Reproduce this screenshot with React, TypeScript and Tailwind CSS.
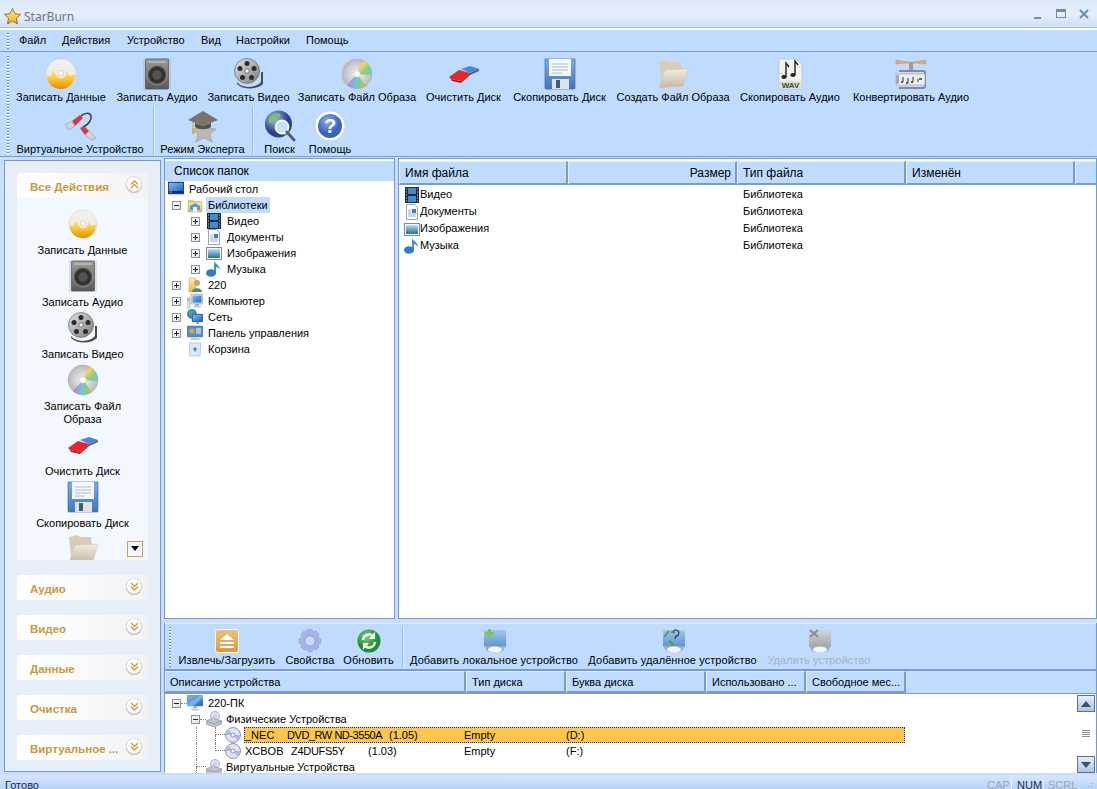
import React from "react";

const Defs = () => (
  <svg width="0" height="0" className="absolute">
    <defs>
      <linearGradient id="gDisc" x1="0" y1="0" x2="0" y2="1"><stop offset="0" stopColor="#f2f2f0" /><stop offset="0.55" stopColor="#ecebe4" /><stop offset="1" stopColor="#e8a820" /></linearGradient>
      <linearGradient id="gFlame" x1="0" y1="0" x2="0" y2="1"><stop offset="0" stopColor="#ffef98" /><stop offset="0.55" stopColor="#f9c52c" /><stop offset="1" stopColor="#e5880e" /></linearGradient>
      <linearGradient id="gSpk" x1="0" y1="0" x2="0" y2="1"><stop offset="0" stopColor="#9a9a98" /><stop offset="1" stopColor="#5a5a58" /></linearGradient>
      <radialGradient id="gCone"><stop offset="0" stopColor="#5c5c5c" /><stop offset="0.7" stopColor="#2a2a2a" /><stop offset="1" stopColor="#777" /></radialGradient>
      <linearGradient id="gReel" x1="0" y1="0" x2="1" y2="1"><stop offset="0" stopColor="#e4e4e4" /><stop offset="1" stopColor="#7c7c7c" /></linearGradient>
      <radialGradient id="gSilver"><stop offset="0" stopColor="#f3f3f3" /><stop offset="1" stopColor="#b9b9b9" /></radialGradient>
      <linearGradient id="gBlue" x1="0" y1="0" x2="0" y2="1"><stop offset="0" stopColor="#7fabdc" /><stop offset="1" stopColor="#3f78bb" /></linearGradient>
      <linearGradient id="gFolder" x1="0" y1="0" x2="0" y2="1"><stop offset="0" stopColor="#f2ece0" /><stop offset="1" stopColor="#c6b8a2" /></linearGradient>
      <radialGradient id="gGlobe" cx="0.35" cy="0.3"><stop offset="0" stopColor="#9cc3e6" /><stop offset="1" stopColor="#2d3f8e" /></radialGradient>
      <radialGradient id="gHelp" cx="0.4" cy="0.3"><stop offset="0" stopColor="#8eaeea" /><stop offset="1" stopColor="#3a62c0" /></radialGradient>
      <linearGradient id="gEject" x1="0" y1="0" x2="0" y2="1"><stop offset="0" stopColor="#eec17c" /><stop offset="1" stopColor="#d9983f" /></linearGradient>
      <radialGradient id="gGreen" cx="0.4" cy="0.3"><stop offset="0" stopColor="#7ed07a" /><stop offset="1" stopColor="#1f8f35" /></radialGradient>
      <linearGradient id="gDrive" x1="0" y1="0" x2="0" y2="1"><stop offset="0" stopColor="#a3c8ea" /><stop offset="1" stopColor="#5a94cc" /></linearGradient>
      <linearGradient id="gGrey" x1="0" y1="0" x2="0" y2="1"><stop offset="0" stopColor="#d2d4d6" /><stop offset="1" stopColor="#a3a6a9" /></linearGradient>
      <linearGradient id="gSky" x1="0" y1="0" x2="0" y2="1"><stop offset="0" stopColor="#bfe0f4" /><stop offset="0.55" stopColor="#5c9fc8" /><stop offset="1" stopColor="#2f7a52" /></linearGradient>
      <linearGradient id="gScreen" x1="0" y1="0" x2="1" y2="1"><stop offset="0" stopColor="#7fc0f0" /><stop offset="1" stopColor="#1c62c8" /></linearGradient>
      <linearGradient id="gYF" x1="0" y1="0" x2="0" y2="1"><stop offset="0" stopColor="#fbe9a8" /><stop offset="1" stopColor="#dfb95a" /></linearGradient>
      <linearGradient id="gStar" x1="0" y1="0" x2="0" y2="1"><stop offset="0" stopColor="#fff39a" /><stop offset="1" stopColor="#f0a818" /></linearGradient>
      <linearGradient id="gRain" x1="0" y1="0" x2="1" y2="1"><stop offset="0" stopColor="#f48aa0" /><stop offset="0.35" stopColor="#f6d25a" /><stop offset="0.65" stopColor="#7fd08a" /><stop offset="1" stopColor="#74bfe0" /></linearGradient>
      <linearGradient id="gRain2" x1="0" y1="0" x2="1" y2="0"><stop offset="0" stopColor="#e070c0" /><stop offset="0.4" stopColor="#74bfe0" /><stop offset="0.7" stopColor="#7fd08a" /><stop offset="1" stopColor="#f3a34f" /></linearGradient>
    </defs>
  </svg>
);

type IP = { s?: number };

const DiscFlame = ({ s = 32 }: IP) => (
  <svg width={s} height={s} viewBox="0 0 32 32">
    <circle cx="16" cy="16" r="15" fill="url(#gDisc)" stroke="#d8d3c0" strokeWidth="0.5" />
    <path d="M2 19c2-3 3-1 4 0 0-4 2-5 3-7 1 3 2 4 3 5 0-3 2-5 3-7 1 3 3 5 4 8 1-2 2-3 3-5 1 3 2 5 3 5 1-1 3-1 5-1-1 8-7 14-14 14S3 27 2 19z" fill="url(#gFlame)" />
    <circle cx="16" cy="15" r="5.5" fill="#f2efe4" opacity="0.85" />
    <circle cx="16" cy="15" r="2.6" fill="#fff" stroke="#bdb9a8" strokeWidth="0.6" />
  </svg>
);
const Speaker = ({ s = 32 }: IP) => (
  <svg width={s} height={s} viewBox="0 0 32 32">
    <rect x="2" y="0" width="28" height="32" rx="2" fill="#8a8a88" opacity="0.22" />
    <rect x="4.5" y="1" width="23" height="30" rx="1" fill="url(#gSpk)" stroke="#4a4a48" strokeWidth="0.6" />
    <rect x="7" y="3" width="18" height="2" fill="#b4b4b2" />
    <circle cx="16" cy="17" r="10" fill="url(#gCone)" stroke="#8c8c8a" />
    <circle cx="16" cy="17" r="4.5" fill="#555" />
  </svg>
);
const FilmReel = ({ s = 32 }: IP) => (
  <svg width={s} height={s} viewBox="0 0 32 32">
    <path d="M4 24c4 6 18 7 24 0l0-10 2 0 0 12c-6 6-20 6-26 0z" fill="#4c4c4a" />
    <circle cx="14" cy="13" r="12.5" fill="url(#gReel)" stroke="#666" strokeWidth="0.7" />
    <g fill="#2b2b2b">
      <circle cx="14" cy="5.5" r="2.5" /><circle cx="21" cy="10.5" r="2.5" /><circle cx="18.5" cy="19.5" r="2.5" /><circle cx="9.5" cy="19.5" r="2.5" /><circle cx="7" cy="10.5" r="2.5" />
    </g>
    <circle cx="14" cy="13" r="2.2" fill="#efefef" stroke="#444" strokeWidth="0.6" />
  </svg>
);
const RainbowDisc = ({ s = 32 }: IP) => (
  <svg width={s} height={s} viewBox="0 0 32 32">
    <circle cx="16" cy="16" r="15" fill="url(#gSilver)" stroke="#a8a8a8" strokeWidth="0.5" />
    <path d="M16 16L21 2A15 15 0 0 1 31 17z" fill="url(#gRain)" />
    <path d="M16 16L6 27A15 15 0 0 0 25 28z" fill="url(#gRain2)" />
    <circle cx="16" cy="16" r="3.2" fill="#fff" stroke="#bbb" strokeWidth="0.5" />
  </svg>
);
const Eraser = ({ s = 32 }: IP) => (
  <svg width={s} height={s} viewBox="0 0 32 32">
    <path d="M1 19l10-7 11 3-9 8-10-2z" fill="#e8262a" />
    <path d="M3 21l10 2 0 2-9-2z" fill="#a81a1c" />
    <path d="M13 23l9-8 0 2-9 8z" fill="#b81e20" />
    <path d="M13 11l9-3 9 3-9 4z" fill="#4a88d6" />
    <path d="M22 15l9-4 0 2-9 4z" fill="#2f63ac" />
  </svg>
);
const Floppy = ({ s = 32 }: IP) => (
  <svg width={s} height={s} viewBox="0 0 32 32">
    <path d="M1 1h30v29a1 1 0 0 1-1 1H2a1 1 0 0 1-1-1z" fill="url(#gBlue)" stroke="#2f63a8" strokeWidth="0.6" />
    <rect x="5" y="1" width="22" height="17" fill="#f5f6f8" />
    <path d="M8 6h16M8 9h16M8 12h16M8 15h10" stroke="#9db3cc" strokeWidth="0.8" />
    <rect x="8" y="21" width="17" height="10" fill="#dfe2e6" />
    <rect x="12" y="22" width="4" height="8" fill="#405a80" />
  </svg>
);
const FolderBig = ({ s = 32 }: IP) => (
  <svg width={s} height={s} viewBox="0 0 32 32">
    <path d="M2 4l8-2 3 2 11 0 1 9-20 17z" fill="#d8ccb8" />
    <path d="M8 12l23-1-5 17-24 2z" fill="url(#gFolder)" stroke="#cfc4b0" strokeWidth="0.5" />
  </svg>
);
const WavNote = ({ s = 32 }: IP) => (
  <svg width={s} height={s} viewBox="0 0 32 32">
    <path d="M5 1h17l6 6v24H5z" fill="#f3f3ee" stroke="#b9b9b0" strokeWidth="0.6" />
    <path d="M12 19V5l3 4M21 17V3l3 4" stroke="#222" strokeWidth="1.4" fill="none" />
    <ellipse cx="10" cy="19" rx="2.6" ry="2" fill="#222" /><ellipse cx="19" cy="17" rx="2.6" ry="2" fill="#222" />
    <rect x="5" y="23" width="23" height="8" fill="#d5e4cc" />
    <text x="16.5" y="30" textAnchor="middle" fontSize="8" fontWeight="700" fontFamily="Liberation Sans, sans-serif" fill="#444">WAV</text>
  </svg>
);
const Clamp = ({ s = 32 }: IP) => (
  <svg width={s} height={s} viewBox="0 0 32 32">
    <path d="M1 2l13 2h4l13-2v4l-13-1h-4L1 6z" fill="#e0ac7a" stroke="#c08c5a" strokeWidth="0.4" />
    <rect x="14" y="5" width="4" height="8" fill="#9a9a9a" />
    <path d="M4 13h24a2 2 0 0 1 2 2v13a2 2 0 0 1-2 2H4" fill="none" stroke="#8a8a8a" strokeWidth="2" />
    <rect x="1" y="16" width="29" height="11" fill="#ededed" stroke="#999" strokeWidth="0.5" />
    <rect x="1" y="17" width="3" height="9" fill="#aaa" />
    <path d="M8 19v5M13 20v5M18 19v5M23 21v3" stroke="#333" strokeWidth="1" />
    <path d="M6 24h2M11 25h2M16 24h2M24 21h3" stroke="#333" strokeWidth="1.4" />
  </svg>
);
const Cables = ({ s = 32 }: IP) => (
  <svg width={s} height={s} viewBox="0 0 32 32">
    <path d="M17 6c3-3 9-4 10 0s-3 9-8 11" fill="none" stroke="#3a3a3a" strokeWidth="1.5" />
    <path d="M8 11l8-6 3 3-8 8z" fill="#d8383c" />
    <path d="M1 15l7-4 3 5-6 4z" fill="#d2d4d6" stroke="#8a8a8a" strokeWidth="0.5" />
    <path d="M16 18l4-2 5 5-4 4z" fill="#d8383c" />
    <path d="M21 25l4-4 7 7-4 2z" fill="#d2d4d6" stroke="#8a8a8a" strokeWidth="0.5" />
  </svg>
);
const Expert = ({ s = 32 }: IP) => (
  <svg width={s} height={s} viewBox="0 0 32 32">
    <path d="M17 11l4 7 8 1-6 5 2 8-8-4-8 4 2-8-6-5 8-1z" fill="#b8b8b4" stroke="#8e8e88" strokeWidth="0.5" />
    <path d="M1 10L16 1l15 9-15 6z" fill="#76746c" />
    <path d="M8 13v4c4 3 12 3 16 0v-4l-8 3z" fill="#55534c" />
    <path d="M6 12v9" stroke="#e0b030" strokeWidth="1.2" />
    <rect x="5" y="20" width="2.4" height="4" fill="#e0b030" />
  </svg>
);
const SearchGlobe = ({ s = 32 }: IP) => (
  <svg width={s} height={s} viewBox="0 0 32 32">
    <circle cx="14.5" cy="14" r="13.5" fill="url(#gGlobe)" />
    <path d="M5 8c3-4 8-6 11-4 2 2-2 4-4 5s-1 4-4 4-4-2-3-5z" fill="#7fbf70" />
    <path d="M20 26l5-3-1-3-4 2z" fill="#5d9f66" />
    <circle cx="18" cy="17" r="6.5" fill="#bfe4fa" stroke="#f4f8fc" strokeWidth="1.8" />
    <path d="M23 22l7 8" stroke="#5e5e70" strokeWidth="3" strokeLinecap="round" />
  </svg>
);
const HelpIcon = ({ s = 32 }: IP) => (
  <svg width={s} height={s} viewBox="0 0 32 32">
    <circle cx="16" cy="16" r="15" fill="#fff" stroke="#c0cbe0" strokeWidth="0.6" />
    <circle cx="16" cy="16" r="12" fill="url(#gHelp)" />
    <text x="16" y="23" textAnchor="middle" fontSize="20" fontWeight="700" fontFamily="Liberation Sans, sans-serif" fill="#fff">?</text>
  </svg>
);
const Eject = ({ s = 24 }: IP) => (
  <svg width={s} height={s} viewBox="0 0 24 24">
    <rect x="0.5" y="0.5" width="23" height="23" rx="2.5" fill="url(#gEject)" stroke="#fff4e0" />
    <path d="M12 5l7 6H5z" fill="#fff" />
    <path d="M5 13h14v2H5zM5 17h14v2H5z" fill="#fff" />
  </svg>
);
const Gear = ({ s = 24 }: IP) => (
  <svg width={s} height={s} viewBox="0 0 24 24">
    <path d="M10 0h4l1 3 3-1 3 3-1 3 3 2v4l-3 1 1 3-3 3-3-1-1 3h-4l-1-3-3 1-3-3 1-3-3-1v-4l3-2-1-3 3-3 3 1z" fill="#a9b2e6" stroke="#8f99d6" strokeWidth="0.5" />
    <circle cx="12" cy="12" r="5.2" fill="#c8dcf8" stroke="#949edc" />
  </svg>
);
const Refresh = ({ s = 24 }: IP) => (
  <svg width={s} height={s} viewBox="0 0 24 24">
    <circle cx="12" cy="12" r="11.5" fill="url(#gGreen)" />
    <path d="M6 11a6 6 0 0 1 10-4" fill="none" stroke="#fff" strokeWidth="2.4" />
    <path d="M18 3v7h-6z" fill="#fff" />
    <path d="M18 13a6 6 0 0 1-10 4" fill="none" stroke="#fff" strokeWidth="2.4" />
    <path d="M6 21v-7h6z" fill="#fff" />
  </svg>
);
const DriveBase = ({ grey }: { grey?: boolean }) => (
  <>
    <rect x="2" y="1" width="22" height="17" rx="1.5" fill={grey ? "url(#gGrey)" : "url(#gDrive)"} />
    <path d="M2 17h22l-3 5a12 4 0 0 1-16 0z" fill="#9cb0c4" />
    <ellipse cx="13" cy="20.5" rx="7" ry="3" fill="#f2f4f6" />
  </>
);
const DriveAdd = ({ s = 24 }: IP) => (
  <svg width={s} height={s} viewBox="0 0 24 24"><DriveBase /><path d="M6 0h3v3h3v3H9v3H6V6H3V3h3z" fill="#7cc84e" /></svg>
);
const DriveNet = ({ s = 24 }: IP) => (
  <svg width={s} height={s} viewBox="0 0 24 24"><DriveBase /><path d="M3 8l5-6M10 3l4 1M8 12l5 4" stroke="#4f9a4a" strokeWidth="1.8" fill="none" /><path d="M12 3a3 3 0 1 1 3 4l-1 3" stroke="#33507a" strokeWidth="1.4" fill="none" /></svg>
);
const DriveDel = ({ s = 24 }: IP) => (
  <svg width={s} height={s} viewBox="0 0 24 24"><DriveBase grey /><path d="M3 1l8 7M11 1L3 8" stroke="#8c8f92" strokeWidth="2" /></svg>
);

const S = ({ children }: { children: React.ReactNode }) => (
  <svg width="16" height="16" viewBox="0 0 16 16" className="shrink-0">{children}</svg>
);
const SDesktop = () => <S><rect x="0" y="1" width="16" height="12" fill="#28478c" stroke="#223a70" strokeWidth="0.5" /><rect x="1" y="2" width="14" height="8" fill="url(#gScreen)" /><rect x="1" y="10" width="14" height="2" fill="#182c5c" /><rect x="2" y="10.5" width="2" height="1" fill="#e0c040" /></S>;
const SLib = () => <S><path d="M1 3h5l1 1h7v3H1z" fill="#e6c777" /><rect x="1" y="5" width="14" height="10" fill="url(#gYF)" stroke="#c7a34a" strokeWidth="0.5" /><path d="M3 13V9l5-3 5 3v4" fill="#4f9fd6" /><rect x="6" y="10" width="4" height="5" fill="#e8f2fa" /></S>;
const SVideo = () => <S><rect x="1" y="0" width="14" height="16" fill="#1c2a36" /><rect x="4" y="1" width="8" height="6" fill="#3f8fd0" /><rect x="4" y="9" width="8" height="6" fill="#3f8fd0" /><path d="M2 2h1M2 5h1M2 8h1M2 11h1M2 14h1M13 2h1M13 5h1M13 8h1M13 11h1M13 14h1" stroke="#d8d8d8" strokeWidth="1.2" /></S>;
const SDoc = () => <S><path d="M2.5 0.5h8l3 3v12h-11z" fill="#fff" stroke="#9aa4b4" /><path d="M4 6h3M4 8h3M4 10h8M4 12h8" stroke="#8a9ab4" strokeWidth="0.8" /><rect x="8" y="5" width="4" height="4" fill="#3f78c8" /></S>;
const SImg = () => <S><rect x="0.5" y="2.5" width="15" height="12" fill="#f4f6f8" stroke="#7d8a9a" /><rect x="2" y="4" width="12" height="9" fill="url(#gSky)" /></S>;
const SMusic = () => <S><path d="M8 12V0c1 3 6 4 6 9-1-2-3-3-4-3v7z" fill="#3f8fd8" /><ellipse cx="5" cy="12" rx="5" ry="3.8" fill="#2c7fcc" /></S>;
const SUser = () => <S><path d="M2 1h6l1 2v12H2z" fill="url(#gYF)" stroke="#c7a34a" strokeWidth="0.5" /><circle cx="10" cy="6" r="3" fill="#c8a070" /><path d="M5 15c0-5 10-5 10 0z" fill="#4f8a76" /></S>;
const SComputer = () => <S><rect x="0" y="5" width="3" height="10" fill="#dfe3e8" stroke="#8a929c" strokeWidth="0.5" /><rect x="0.7" y="6" width="1.4" height="2" fill="#70c040" /><rect x="4" y="1" width="12" height="10" fill="#d8dde4" stroke="#8a929c" strokeWidth="0.5" /><rect x="5.5" y="2.5" width="9" height="7" fill="url(#gScreen)" /><rect x="8" y="11" width="4" height="2" fill="#aab" /><rect x="6" y="13" width="8" height="1.5" fill="#c8ccd4" /></S>;
const SNet = () => <S><circle cx="5" cy="5" r="5" fill="#2c8ad0" /><path d="M2 3c2-2 4-2 5-1l-2 3-3 1z" fill="#58b048" /><rect x="5" y="5" width="11" height="8" fill="#2c55a8" stroke="#8a929c" strokeWidth="0.5" /><rect x="6" y="6" width="9" height="6" fill="url(#gScreen)" /><rect x="9" y="13" width="3" height="2" fill="#9aa" /></S>;
const SPanel = () => <S><rect x="0" y="1" width="16" height="11" rx="1" fill="#4f8fd0" stroke="#3a6ca8" strokeWidth="0.5" /><circle cx="5" cy="6" r="2.6" fill="#f0a030" /><path d="M9 4h5M9 6h5M9 8h5" stroke="#fff" strokeWidth="1" /><path d="M4 13h8l1 2H3z" fill="#c8ccd4" /></S>;
const SBin = () => <S><path d="M2 2h12l-1 13H3z" fill="#dce9f6" stroke="#9cb0c8" strokeWidth="0.6" /><path d="M6 8l2-2 2 2-2 3z" fill="#3f8fd0" /></S>;
const SMonitor = () => <S><rect x="0" y="0" width="16" height="11" fill="url(#gScreen)" stroke="#6a90c0" strokeWidth="0.5" /><path d="M0 9L14 0h2v3L6 11H0z" fill="#9fd4f4" opacity="0.5" /><rect x="6" y="11" width="4" height="2" fill="#a8b0bc" /><ellipse cx="8" cy="14.5" rx="4" ry="1.3" fill="#c8ccd4" /></S>;
const SDrives = () => <S><circle cx="9" cy="5" r="4.5" fill="#dfe4f4" stroke="#7a84a8" strokeWidth="0.6" /><circle cx="9" cy="5" r="1.2" fill="#fff" stroke="#667" strokeWidth="0.4" /><path d="M0 10l7-3 9 3v3l-8 3-8-3z" fill="#c0c4cc" stroke="#777f8c" strokeWidth="0.5" /><path d="M0 10l8 3 8-3" fill="none" stroke="#777f8c" strokeWidth="0.5" /></S>;
const SCd = () => <S><circle cx="8" cy="8" r="7.5" fill="#e0e2f4" stroke="#6a6f98" strokeWidth="0.7" /><path d="M8 8L3 2a7.5 7.5 0 0 0-2 6z" fill="#b4b8e0" /><path d="M8 8l5 6a7.5 7.5 0 0 0 2-6z" fill="#b4b8e0" /><circle cx="8" cy="8" r="2" fill="#fff" stroke="#555a80" strokeWidth="0.6" /></S>;

const Chevrons = ({ up }: { up?: boolean }) => (
  <div className="w-4 h-4 rounded-full bg-white border border-[#dcdcdc] shadow-[0_1px_1px_#bbb] flex items-center justify-center">
    <svg width="9" height="9" viewBox="0 0 9 9" fill="none" stroke="#c39a3e" strokeWidth="1.3">
      {up ? <path d="M1 4.5L4.5 1 8 4.5M1 8L4.5 4.5 8 8" /> : <path d="M1 1l3.5 3.5L8 1M1 4.5L4.5 8 8 4.5" />}
    </svg>
  </div>
);

const Grip = ({ h }: { h: string }) => (
  <div className={`w-[2px] ${h} shrink-0 bg-[repeating-linear-gradient(to_bottom,#5f8fd0_0,#5f8fd0_1px,#ffffff_1px,#ffffff_2px,transparent_2px,transparent_3px)]`} />
);

const ToolItem = ({ w, label, icon, top }: { w: string; label: string; icon: React.ReactNode; top?: boolean }) => (
  <div className={`${w} shrink-0 flex flex-col items-center ${top ? "mt-[3px]" : ""}`}>
    <div className="h-8 flex items-center justify-center">{icon}</div>
    <div className="mt-[1px] whitespace-nowrap leading-[13px]">{label}</div>
  </div>
);

const row1 = [
  { w: "w-[90px]", label: "Записать Данные", icon: <DiscFlame /> },
  { w: "w-[82px]", label: "Записать Аудио", icon: <Speaker /> },
  { w: "w-[81px]", label: "Записать Видео", icon: <FilmReel /> },
  { w: "w-[116px]", label: "Записать Файл Образа", icon: <RainbowDisc /> },
  { w: "w-[77px]", label: "Очистить Диск", icon: <Eraser /> },
  { w: "w-[95px]", label: "Скопировать Диск", icon: <Floppy /> },
  { w: "w-[112px]", label: "Создать Файл Образа", icon: <FolderBig /> },
  { w: "w-[102px]", label: "Скопировать Аудио", icon: <WavNote /> },
  { w: "w-[120px]", label: "Конвертировать Аудио", icon: <Clamp /> },
];

const Toolbar = () => (
  <div className="h-[105px] shrink-0 flex bg-[#bfdbff] pl-[7px] pt-[4px] pb-[1px] border-b border-[#7a9ccc]">
    <Grip h="h-[99px]" />
    <div className="ml-[7px] pt-[2px] flex flex-col">
      <div className="h-[49px] flex gap-[10px]">
        {row1.map((r) => <ToolItem key={r.label} {...r} />)}
      </div>
      <div className="h-[48px] flex items-start">
        <ToolItem top w="w-[128px]" label="Виртуальное Устройство" icon={<Cables />} />
        <div className="w-[2px] h-[48px] ml-[9px] mr-[6px] bg-[#9cbfe8] border-r border-[#e4effd]" />
        <ToolItem top w="w-[83px]" label="Режим Эксперта" icon={<Expert />} />
        <div className="w-[2px] h-[48px] ml-[8px] mr-[10px] bg-[#9cbfe8] border-r border-[#e4effd]" />
        <ToolItem top w="w-[31px]" label="Поиск" icon={<SearchGlobe />} />
        <div className="w-[15px]" />
        <ToolItem top w="w-[40px]" label="Помощь" icon={<HelpIcon />} />
      </div>
    </div>
  </div>
);

const Act = ({ label, icon, tall }: { label: React.ReactNode; icon: React.ReactNode; tall?: boolean }) => (
  <div className={`shrink-0 flex flex-col items-center ${tall ? "h-[65px]" : "h-[52px]"}`}>
    <div className="h-8 shrink-0 flex items-center">{icon}</div>
    <div className="text-center leading-[13px] mt-[4px]">{label}</div>
  </div>
);

const Head = ({ label, up }: { label: string; up?: boolean }) => (
  <div className="h-[25px] flex justify-between rounded-t-[4px] bg-gradient-to-r from-white to-[#f3f3f3] pl-[13px] pr-[6px] pt-[3px]">
    <span className="font-bold text-[#c79a3c] text-[11.5px] whitespace-nowrap leading-[22px]">{label}</span>
    <Chevrons up={up} />
  </div>
);

const LeftPane = () => (
  <div className="w-[157px] shrink-0 mt-[3px] mb-[1px] border border-[#6f9ad8] bg-[#e8eff9] px-[12px] pt-[12px] flex flex-col gap-[15px]">
    <div>
      <Head label="Все Действия" up />
      <div className="h-[362px] bg-[#f3f7fe] overflow-hidden pt-[10px] flex flex-col relative">
        <Act label="Записать Данные" icon={<DiscFlame s={30} />} />
        <Act label="Записать Аудио" icon={<Speaker />} />
        <Act label="Записать Видео" icon={<FilmReel />} />
        <Act tall label={<>Записать Файл<br />Образа</>} icon={<RainbowDisc />} />
        <Act label="Очистить Диск" icon={<Eraser />} />
        <Act label="Скопировать Диск" icon={<Floppy />} />
        <Act label="" icon={<FolderBig />} />
        <div className="absolute right-[4px] bottom-[3px] w-4 h-4 border border-[#c8a050] bg-[#f3f7fe] flex items-center justify-center mr-[1px]">
          <svg width="10" height="6" viewBox="0 0 10 6"><path d="M1 0h8L5 5z" fill="#000" /></svg>
        </div>
      </div>
    </div>
    {["Аудио", "Видео", "Данные", "Очистка", "Виртуальное ..."].map((t) => <Head key={t} label={t} />)}
  </div>
);

const Plus = ({ minus }: { minus?: boolean }) => (
  <div className="w-[9px] h-[9px] border border-[#8a929c] bg-gradient-to-br from-white to-[#dfe3e8] flex items-center justify-center relative shrink-0">
    <div className="w-[5px] h-[1px] bg-[#222]" />
    {!minus && <div className="absolute w-[1px] h-[5px] bg-[#222]" />}
  </div>
);

const Tree = ({ pad, box, minus, icon, label, sel }: { pad: string; box?: boolean; minus?: boolean; icon: React.ReactNode; label: string; sel?: boolean }) => (
  <div className={`h-4 flex items-center ${pad}`}>
    {box && <Plus minus={minus} />}
    <div className={`${box ? "ml-[6px]" : ""} flex items-center`}>{icon}</div>
    <span className={`ml-[3px] px-[2px] leading-4 whitespace-nowrap ${sel ? "bg-[#bfdbff]" : ""}`}>{label}</span>
  </div>
);

const FolderPane = () => (
  <div className="w-[231px] shrink-0 border border-[#6f9ad8] bg-white">
    <div className="h-[20px] mt-[2px] bg-[#bfdbff] pl-[9px] flex items-center text-[12px]">Список папок</div>
    <div>
      <Tree pad="pl-[3px]" icon={<SDesktop />} label="Рабочий стол" />
      <Tree pad="pl-[7px]" box minus icon={<SLib />} label="Библиотеки" sel />
      <Tree pad="pl-[26px]" box icon={<SVideo />} label="Видео" />
      <Tree pad="pl-[26px]" box icon={<SDoc />} label="Документы" />
      <Tree pad="pl-[26px]" box icon={<SImg />} label="Изображения" />
      <Tree pad="pl-[26px]" box icon={<SMusic />} label="Музыка" />
      <Tree pad="pl-[7px]" box icon={<SUser />} label="220" />
      <Tree pad="pl-[7px]" box icon={<SComputer />} label="Компьютер" />
      <Tree pad="pl-[7px]" box icon={<SNet />} label="Сеть" />
      <Tree pad="pl-[7px]" box icon={<SPanel />} label="Панель управления" />
      <Tree pad="pl-[22px]" icon={<SBin />} label="Корзина" />
    </div>
  </div>
);

const Th = ({ w, children, right }: { w: string; children?: React.ReactNode; right?: boolean }) => (
  <div className={`${w} shrink-0 h-full bg-[#bfdbff] border-r-2 border-b-2 border-r-[#7a9ccc] border-b-[#7a9ccc] border-t border-l border-t-[#e4effd] border-l-[#e4effd] flex items-center pl-[5px] pr-[4px] whitespace-nowrap ${right ? "justify-end" : ""}`}>{children}</div>
);

const FileRow = ({ icon, name }: { icon: React.ReactNode; name: string }) => (
  <div className="h-[17px] flex items-center pl-[5px]">
    {icon}
    <span className="w-[323px]">{name}</span>
    <span>Библиотека</span>
  </div>
);

const FilePane = () => (
  <div className="flex-1 border border-[#6f9ad8] bg-white overflow-hidden">
    <div className="h-[24px] mt-[2px] flex text-[12px]">
      <Th w="w-[169px]">Имя файла</Th>
      <Th w="w-[169px]" right>Размер</Th>
      <Th w="w-[169px]">Тип файла</Th>
      <Th w="w-[169px]">Изменён</Th>
      <Th w="w-[23px]" />
    </div>
    <div className="pt-[1px]">
      <FileRow icon={<SVideo />} name="Видео" />
      <FileRow icon={<SDoc />} name="Документы" />
      <FileRow icon={<SImg />} name="Изображения" />
      <FileRow icon={<SMusic />} name="Музыка" />
    </div>
  </div>
);

const B = ({ w, label, icon, grey }: { w: string; label: string; icon: React.ReactNode; grey?: boolean }) => (
  <div className={`${w} shrink-0 flex flex-col items-center`}>
    <div className="h-6 flex items-center justify-center">{icon}</div>
    <div className={`mt-[1px] leading-[13px] whitespace-nowrap tracking-[0.08px] ${grey ? "text-[#a9b4c4]" : ""}`}>{label}</div>
  </div>
);

const Conn = ({ last }: { last?: boolean }) => (
  <div className="w-[10px] h-4 shrink-0 flex flex-col">
    <div className="h-2 border-b border-l border-dotted border-[#808080]" />
    {!last && <div className="h-2 border-l border-dotted border-[#808080]" />}
  </div>
);
const Rail = () => <div className="w-[1px] h-4 shrink-0 border-l border-dotted border-[#808080]" />;

const DevRow = ({ a, b, c, d, e, sel }: { a: string; b: string; c: string; d: string; e: string; sel?: boolean }) => (
  <div className={`w-[661px] h-[16px] flex items-center pl-[1px] ${sel ? "bg-[#fac64d] outline-1 -outline-offset-1 outline-dotted outline-[#333]" : ""}`}>
    <span className={sel ? "w-[42px]" : "w-[46px]"}>{a}</span>
    <span className={sel ? "w-[102px] tracking-[-0.45px]" : "w-[77px] tracking-[-0.3px]"}>{b}</span>
    <span className={sel ? "w-[75px]" : "w-[96px]"}>{c}</span>
    <span className="w-[102px]">{d}</span>
    <span>{e}</span>
  </div>
);

const BottomPane = () => (
  <div className="h-[150px] shrink-0 border-x border-[#6f9ad8] flex flex-col bg-white overflow-hidden">
    <div className="h-[48px] bg-[#bfdbff] border-t border-b-2 border-t-[#e4effd] border-b-[#7a9ccc] flex pl-[4px] pt-[3px] shrink-0">
      <Grip h="h-[40px]" />
      <div className="ml-[7px] pt-[2px] flex gap-[10px]">
        <B w="w-[98px]" label="Извлечь/Загрузить" icon={<Eject />} />
        <B w="w-[48px]" label="Свойства" icon={<Gear />} />
        <B w="w-[49px]" label="Обновить" icon={<Refresh />} />
      </div>
      <div className="w-[2px] h-[40px] ml-[9px] mr-[6px] bg-[#9cbfe8] border-r border-[#e4effd]" />
      <div className="pt-[2px] flex gap-[10px]">
        <B w="w-[168px]" label="Добавить локальное устройство" icon={<DriveAdd />} />
        <B w="w-[169px]" label="Добавить удалённое устройство" icon={<DriveNet />} />
        <B w="w-[104px]" label="Удалить устройство" icon={<DriveDel />} grey />
      </div>
    </div>
    <div className="h-[23px] flex shrink-0 text-[11px] bg-[#bfdbff] border-b border-[#7a9ccc]">
      <Th w="w-[301px]"><span className="mt-[2px] -ml-[1px]">Описание устройства</span></Th>
      <Th w="w-[100px]"><span className="mt-[2px]">Тип диска</span></Th>
      <Th w="w-[140px]"><span className="mt-[2px]">Буква диска</span></Th>
      <Th w="w-[100px]"><span className="mt-[2px]">Использовано ...</span></Th>
      <Th w="w-[100px]"><span className="mt-[2px]">Свободное мес...</span></Th>
    </div>
    <div className="flex-1 flex min-h-0 overflow-hidden">
      <div className="flex-1 pt-[1px] overflow-hidden">
        <div className="h-4 flex items-center pl-[7px]">
          <Plus minus />
          <div className="w-[6px] border-b border-dotted border-[#808080]" />
          <SMonitor />
          <span className="ml-[5px]">220-ПК</span>
        </div>
        <div className="h-4 flex items-center pl-[26px]">
          <Plus minus />
          <div className="w-[6px] border-b border-dotted border-[#808080]" />
          <SDrives />
          <span className="ml-[4px]">Физические Устройства</span>
        </div>
        <div className="h-4 flex items-center pl-[31px]">
          <Rail />
          <div className="w-[18px]" />
          <Conn />
          <SCd />
          <div className="ml-[3px]"><DevRow sel a="_NEC" b="DVD_RW ND-3550A" c="(1.05)" d="Empty" e="(D:)" /></div>
        </div>
        <div className="h-4 flex items-center pl-[31px]">
          <Rail />
          <div className="w-[18px]" />
          <Conn last />
          <SCd />
          <div className="ml-[3px]"><DevRow a="XCBOB" b="Z4DUFS5Y" c="(1.03)" d="Empty" e="(F:)" /></div>
        </div>
        <div className="h-4 flex items-center pl-[31px]">
          <Conn />
          <SDrives />
          <span className="ml-[4px]">Виртуальные Устройства</span>
        </div>
      </div>
      <div className="w-[18px] shrink-0 flex flex-col items-center justify-between pt-[1px] mr-[1px]">
        <div className="w-[18px] h-[17px] border border-[#5f6f8c] flex items-center justify-center bg-gradient-to-b from-[#e6eefb] to-[#aec4e4]">
          <svg width="10" height="6" viewBox="0 0 10 6"><path d="M5 0l5 6H0z" fill="#3f4f70" /></svg>
        </div>
        <div className="w-[8px] h-[8px] bg-[repeating-linear-gradient(to_bottom,#909090_0,#909090_1px,transparent_1px,transparent_2px)]" />
        <div className="w-[18px] h-[17px] border border-[#5f6f8c] flex items-center justify-center bg-gradient-to-b from-[#e6eefb] to-[#aec4e4]">
          <svg width="10" height="6" viewBox="0 0 10 6"><path d="M0 0h10L5 6z" fill="#3f4f70" /></svg>
        </div>
      </div>
    </div>
  </div>
);

export default function App() {
  return (
    <div className="w-[1097px] h-[789px] flex flex-col overflow-hidden bg-[#c9def9] text-[11px] text-black font-['Liberation_Sans',sans-serif]">
      <Defs />
      <div className="h-[28px] shrink-0 flex items-center pl-[4px] pt-[5px] bg-gradient-to-b from-[#dbe7f8] via-[#e6eefb] to-[#d0e0f6] border-b border-[#a3c5ee]">
        <svg width="17" height="17" viewBox="0 0 17 17"><path d="M8.5 0.5l2.4 5.2 5.6.7-4.1 3.9 1.1 5.6-5-2.8-5 2.8 1.1-5.6L.5 6.4l5.6-.7z" fill="url(#gStar)" stroke="#7a5a10" strokeWidth="0.8" /></svg>
        <span className="ml-[3px] mt-[1px] text-[12px] text-[#6a7888] font-['Noto_Sans',sans-serif]">StarBurn</span>
        <div className="ml-auto flex items-center pr-[8px] -mt-[5px]">
          <svg width="9" height="9" viewBox="0 0 9 9" className="mt-[1px]"><rect x="1" y="7" width="7" height="2" fill="#6f8cac" /></svg>
          <svg width="10" height="9" viewBox="0 0 10 9" className="ml-[14px]"><rect x="0.5" y="0.5" width="9" height="8" fill="none" stroke="#6f8cac" /><rect x="0" y="0" width="10" height="3" fill="#6f8cac" /></svg>
          <svg width="10" height="10" viewBox="0 0 10 10" className="ml-[13px]"><path d="M1 1l8 8M9 1L1 9" stroke="#6f8cac" strokeWidth="2" /></svg>
        </div>
      </div>
      <div className="h-[2px] shrink-0 bg-white" />
      <div className="h-[22px] shrink-0 bg-[#bfdbff] border-b border-[#7a9ccc] flex items-center pl-[7px]">
        <Grip h="h-[16px]" />
        <div className="ml-[10px] flex">
          <span className="w-[43px]">Файл</span>
          <span className="w-[65px]">Действия</span>
          <span className="w-[74px]">Устройство</span>
          <span className="w-[35px]">Вид</span>
          <span className="w-[70px]">Настройки</span>
          <span>Помощь</span>
        </div>
      </div>
      <Toolbar />
      <div className="flex-1 min-h-0 flex gap-[3px] pl-[4px] pb-[2px]">
        <LeftPane />
        <div className="flex-1 min-w-0 flex flex-col gap-[4px] pt-[1px]">
          <div className="flex-1 min-h-0 flex gap-[3px]">
            <FolderPane />
            <FilePane />
          </div>
          <BottomPane />
        </div>
      </div>
      <div className="h-[14px] shrink-0 bg-gradient-to-b from-[#d8e6fa] to-[#b9d4f8] flex items-start pl-[5px] overflow-hidden leading-[20px] text-[#1a2a50]">
        <span>Готово</span>
        <div className="ml-auto flex pr-[4px]">
          <span className="w-[24px] text-[#9aa8b8]">CAP</span>
          <span className="w-[32px] border-l border-[#e8f0fb] pl-[5px]">NUM</span>
          <span className="w-[40px] border-l border-[#e8f0fb] pl-[4px] text-[#9aa8b8]">SCRL</span>
          <svg width="10" height="14" viewBox="0 0 10 14" className="self-start"><path d="M8 8h1v1H8zM5 11h1v1H5zM8 11h1v1H8z" fill="#8aa4c8" /></svg>
        </div>
      </div>
    </div>
  );
}
